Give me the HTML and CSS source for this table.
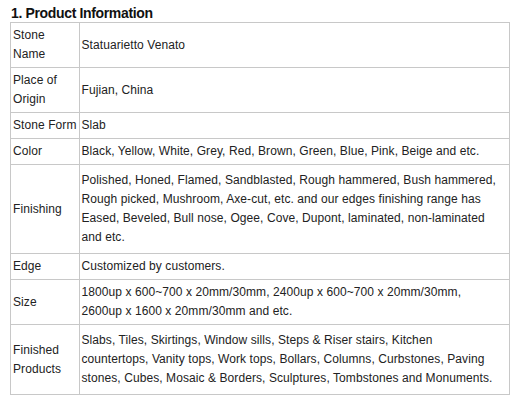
FILE: index.html
```html
<!DOCTYPE html>
<html>
<head>
<meta charset="utf-8">
<link rel="stylesheet" href="styles.css">
</head>
<body>
<h2 class="title">1. Product Information</h2>
<table class="info">
  <tr><td class="label">Stone<br>Name</td><td>Statuarietto Venato</td></tr>
  <tr><td class="label">Place of<br>Origin</td><td>Fujian, China</td></tr>
  <tr><td class="label">Stone Form</td><td>Slab</td></tr>
  <tr><td class="label">Color</td><td>Black, Yellow, White, Grey, Red, Brown, Green, Blue, Pink, Beige and etc.</td></tr>
  <tr class="tall"><td class="label">Finishing</td><td>Polished, Honed, Flamed, Sandblasted, Rough hammered, Bush hammered,<br>Rough picked, Mushroom, Axe-cut, etc. and our edges finishing range has<br>Eased, Beveled, Bull nose, Ogee, Cove, Dupont, laminated, non-laminated<br>and etc.</td></tr>
  <tr><td class="label">Edge</td><td>Customized by customers.</td></tr>
  <tr><td class="label">Size</td><td>1800up x 600~700 x 20mm/30mm, 2400up x 600~700 x 20mm/30mm,<br>2600up x 1600 x 20mm/30mm and etc.</td></tr>
  <tr class="tall"><td class="label">Finished<br>Products</td><td>Slabs, Tiles, Skirtings, Window sills, Steps &amp; Riser stairs, Kitchen<br>countertops, Vanity tops, Work tops, Bollars, Columns, Curbstones, Paving<br>stones, Cubes, Mosaic &amp; Borders, Sculptures, Tombstones and Monuments.</td></tr>
</table>
</body>
</html>
```
FILE: styles.css
```css
html, body {
  margin: 0;
  padding: 0;
  background: #fff;
}
body {
  padding: 5px 12px 0 10px;
  font-family: "Liberation Sans", Arial, sans-serif;
  color: #222;
}
.title {
  margin: 0 0 1px 1px;
  font-size: 14px;
  font-weight: bold;
  line-height: 16px;
  letter-spacing: -0.35px;
  color: #111;
}
.info {
  width: 500px;
  border-collapse: collapse;
  font-size: 12px;
  line-height: 19px;
  letter-spacing: 0.08px;
}
.info td {
  border: 1px solid #c8c8c8;
  padding: 3px 2px 3px 2px;
  vertical-align: middle;
  text-align: left;
  white-space: nowrap;
}
.info td.label {
  width: 63px;
}
.info tr.tall td {
  padding-top: 6px;
  padding-bottom: 6px;
}
```
